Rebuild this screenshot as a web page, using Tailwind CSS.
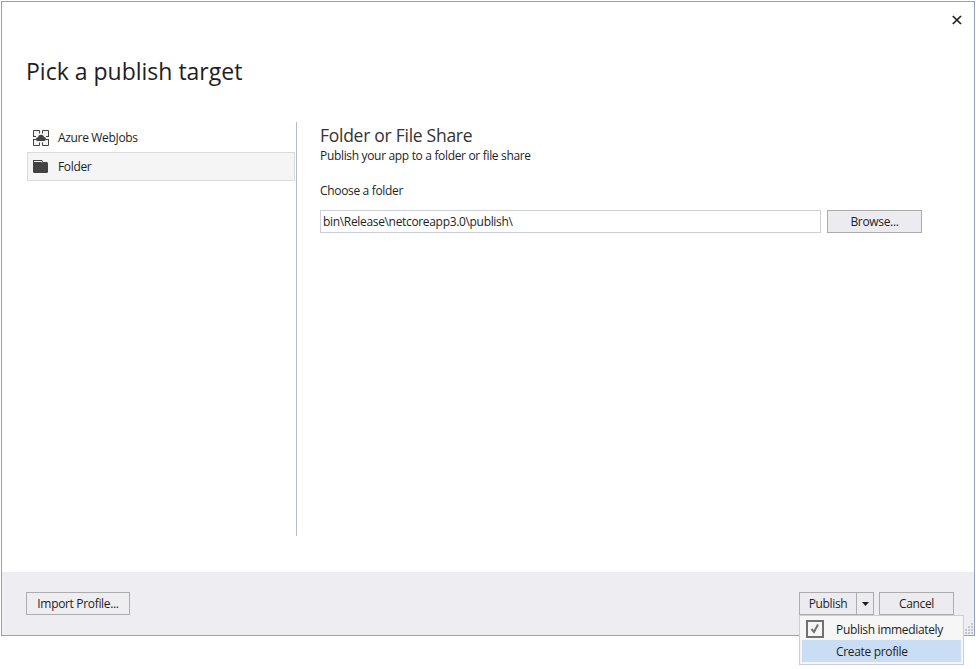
<!DOCTYPE html>
<html lang="en">
<head>
<meta charset="utf-8">
<title>Publish</title>
<script src="https://cdn.jsdelivr.net/npm/@tailwindcss/browser@4"></script>
</head>
<body class="bg-white w-[976px] h-[669px] overflow-hidden p-px font-['Open_Sans','Noto_Sans',sans-serif] text-[12px] tracking-[-0.33px] leading-4 text-[#1e1e1e] whitespace-nowrap">
<div class="relative flex flex-col w-[974px] h-[635px] border border-[#9b9fb9] bg-white">
  <header class="relative h-[120px] pl-6 pt-[51px]">
    <h1 class="text-[23px] leading-9 tracking-[0px]">Pick a publish target</h1>
    <button aria-label="Close" class="absolute left-[950px] top-[13px] w-[10px] h-[10px]">
      <svg width="10" height="10" viewBox="0 0 10 10" fill="none" stroke="#1e1e1e" stroke-width="1.7"><path d="M.8 1 9 9M9 1 .8 9"/></svg>
    </button>
  </header>
  <main class="flex h-[414px] pl-[25px]">
    <nav class="w-[268px] pt-[1px]">
      <div class="flex items-center h-[29px] pl-[6px] gap-[9px]">
        <svg width="16" height="16" viewBox="0 0 16 16"><path d="M0 0h16v16H0z" fill="#f3f3f3"/><path d="M.5 6.500V.5H6.500V3.500M0 6.500H3M9.500 3.500V.5h6v6M13 6.500h3M.5 9v6.500H6.500V12.500M0 9.500h3M9.500 12.500v3h6V9M13 9.500h3" fill="none" stroke="#424242"/><path d="M4.500 11A1.700 1.700 0 0 1 3 9.200C3 8 3.800 7.300 4.900 7.200A3.200 3.200 0 0 1 8 4.800c1.500 0 2.700.9 3 2.200 1.300 0 2 .9 2 2.100s-.9 1.900-2 1.900z" fill="#424242"/></svg>
        <span class="pt-px">Azure WebJobs</span>
      </div>
      <div class="flex items-center h-[29px] pl-[5px] gap-[9px] border border-[#dadada] bg-[#f5f5f5]">
        <svg width="16" height="16" viewBox="0 0 16 16"><path d="M0 1h9l1 2h4.500v1l.5.500V13l-.8 1H.8L0 13z" fill="#424242"/><path d="M1 2.500h7.500l.5 1" fill="none" stroke="#f5f5f5"/></svg>
        <span class="pt-px">Folder</span>
      </div>
    </nav>
    <div class="ml-px w-px bg-[#b5bcca]"></div>
    <section class="ml-[23px] w-[602px]">
      <h2 class="text-[17.5px] leading-[26px] h-[26px] tracking-[-0.27px] text-[#333]">Folder or File Share</h2>
      <p>Publish your app to a folder or file share</p>
      <p class="mt-[19px]">Choose a folder</p>
      <div class="flex mt-[11px] gap-[6px]">
        <div class="w-[501px] h-[23px] border border-[#cccedb] pl-[2px] leading-[22px]">bin\Release\netcoreapp3.0\publish\</div>
        <button class="w-[95px] h-[23px] border border-[#acacac] bg-[#ececf0] leading-[21px]">Browse...</button>
      </div>
    </section>
  </main>
  <footer class="relative mt-auto flex h-[63px] bg-[#eeeef2] pl-6 pr-5 pt-5">
    <button class="w-[104px] h-[23px] border border-[#acacac] leading-[21px]">Import Profile...</button>
    <div class="ml-auto flex w-[75px] h-[23px] border border-[#acacac] bg-[#ececf0]">
      <button class="w-[57px] border-r border-[#acacac] leading-[21px]">Publish</button>
      <button aria-label="More" class="flex-1 flex justify-center items-center"><svg width="7" height="4" viewBox="0 0 7 4"><path d="M0 0h7L3.500 4z" fill="#1e1e1e"/></svg></button>
    </div>
    <button class="ml-[5px] w-[75px] h-[23px] border border-[#acacac] bg-[#ececf0] leading-[21px]">Cancel</button>
    <svg class="absolute left-[963px] top-[51px]" width="8" height="11" viewBox="0 0 8 11" fill="#c3c5d5"><path d="M6 0h2v2H6zM3 3h2v2H3zM6 3h2v2H6zM0 6h2v2H0zM3 6h2v2H3zM6 6h2v2H6zM0 9h2v2H0zM3 9h2v2H3zM6 9h2v2H6z"/></svg>
  </footer>
  <div class="absolute left-[797px] top-[613px] w-[165px] h-[50px] border border-[#cccedb] bg-[#f6f6f6] p-[2px]">
    <div class="flex h-[22px] items-center pl-1">
      <div class="w-[18px] h-[18px] border-2 border-[#717171]"><svg width="14" height="14" viewBox="0 0 14 14" fill="none" stroke="#717171" stroke-width="2"><path d="m3.500 7 2.500 3 4-7.500"/></svg></div>
      <span class="ml-3 pt-[2px]">Publish immediately</span>
    </div>
    <div class="h-[22px] bg-[#c9def5] pl-[34px] leading-[24px]">Create profile</div>
  </div>
</div>
</body>
</html>
